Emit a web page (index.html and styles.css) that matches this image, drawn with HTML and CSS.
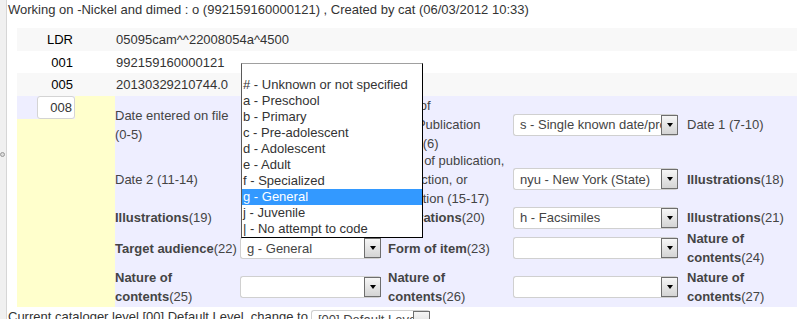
FILE: index.html
```html
<html>
    <head>
        <meta charset="utf-8">
        <title>MARC editor</title>
        <link rel="stylesheet" href="styles.css">
    </head>
    <body>
        <div class="page">
            <div class="splitter"><span class="grip"></span></div>
            <div class="main">
                <div class="title">Working on -Nickel and dimed : o (992159160000121) , Created by cat (06/03/2012 10:33)</div>

                <div class="marc">
                    <div class="field shade">
                        <div class="tag">LDR</div>
                        <div class="ind"></div>
                        <div class="val">05095cam^^22008054a^4500</div>
                    </div>
                    <div class="field plain">
                        <div class="tag">001</div>
                        <div class="ind"></div>
                        <div class="val">992159160000121</div>
                    </div>
                    <div class="field shade">
                        <div class="tag">005</div>
                        <div class="ind"></div>
                        <div class="val">20130329210744.0</div>
                    </div>

                    <div class="fixed">
                        <div class="fixed-left">
                            <div class="tagcell"><span class="taginput">008</span></div>
                        </div>
                        <div class="ff">
                            <!-- row 1 -->
                            <div class="lbl">Date entered on file (0-5)</div>
                            <div></div>
                            <div class="lbl">Type of date/Publication status(6)</div>
                            <div class="sel w2"><span class="sel-text">s - Single known date/probable date</span><span class="sel-btn"><i></i></span></div>
                            <div class="lbl">Date 1 (7-10)</div>

                            <!-- row 2 -->
                            <div class="lbl">Date 2 (11-14)</div>
                            <div></div>
                            <div class="lbl">Place of publication, production, or execution (15-17)</div>
                            <div class="sel w2"><span class="sel-text">nyu - New York (State)</span><span class="sel-btn"><i></i></span></div>
                            <div class="lbl"><b>Illustrations</b>(18)</div>

                            <!-- row 3 -->
                            <div class="lbl"><b>Illustrations</b>(19)</div>
                            <div></div>
                            <div class="lbl"><b>Illustrations</b>(20)</div>
                            <div class="sel w2"><span class="sel-text">h - Facsimiles</span><span class="sel-btn"><i></i></span></div>
                            <div class="lbl"><b>Illustrations</b>(21)</div>

                            <!-- row 4 -->
                            <div class="lbl"><b>Target audience</b>(22)</div>
                            <div class="sel w1 open">
                                <span class="sel-text">g - General</span><span class="sel-btn"><i></i></span>
                                <div class="listbox">
                                    <div class="opt first"></div>
                                    <div class="opt"># - Unknown or not specified</div>
                                    <div class="opt">a - Preschool</div>
                                    <div class="opt">b - Primary</div>
                                    <div class="opt">c - Pre-adolescent</div>
                                    <div class="opt">d - Adolescent</div>
                                    <div class="opt">e - Adult</div>
                                    <div class="opt">f - Specialized</div>
                                    <div class="opt selected">g - General</div>
                                    <div class="opt">j - Juvenile</div>
                                    <div class="opt">| - No attempt to code</div>
                                </div>
                            </div>
                            <div class="lbl"><b>Form of item</b>(23)</div>
                            <div class="sel w2"><span class="sel-text"></span><span class="sel-btn"><i></i></span></div>
                            <div class="lbl"><b>Nature of contents</b>(24)</div>

                            <!-- row 5 -->
                            <div class="lbl"><b>Nature of contents</b>(25)</div>
                            <div class="sel w1"><span class="sel-text"></span><span class="sel-btn"><i></i></span></div>
                            <div class="lbl"><b>Nature of contents</b>(26)</div>
                            <div class="sel w2"><span class="sel-text"></span><span class="sel-btn"><i></i></span></div>
                            <div class="lbl"><b>Nature of contents</b>(27)</div>
                        </div>
                    </div>
                </div>

                <div class="footer">
                    <span class="footer-text">Current cataloger level [00] Default Level, change to</span>
                    <div class="sel wf"><span class="sel-text">[00] Default Level</span><span class="sel-btn"><i></i></span></div>
                </div>
            </div>
        </div>
    </body>
</html>
```
FILE: styles.css
```css
body{
    margin:0;
    font-family:"Liberation Sans", Arial, sans-serif;
    font-size:13px;
    color:#333;
    background:#fff;
    overflow:hidden;
}

.page{
    display:flex;
    min-height:319px;
}
.splitter{
    flex:none;
    width:7px;
    box-sizing:border-box;
    background:#f0f0f0;
    border-right:1px solid #d6d6d6;
    padding-top:152px;
}
.grip{
    display:block;
    width:5px;
    height:5px;
    box-sizing:border-box;
    border:1px solid #999;
    border-radius:50%;
    background:#dcdcdc;
}
.main{
    flex:1;
    min-width:0;
    padding-left:1px;
}
.title{
    height:28px;
    line-height:20px;
    white-space:nowrap;
}

.marc{
    margin-left:9px;
}
.field{
    display:flex;
    align-items:center;
    height:23px;
}
.field.plain{
    height:22px;
}
.shade{
    background:#f8f8f8;
}
.tag{
    width:56px;
    padding-right:2px;
    text-align:right;
    color:#000;
}
.ind{
    width:40px;
}
.val{
    padding-left:1px;
}

.fixed{
    display:flex;
    height:211px;
    background:#eeeeff;
}
.fixed-left{
    flex:none;
    width:98px;
    background:#ffffcc;
}
.tagcell{
    width:58px;
    height:23px;
    display:flex;
    justify-content:flex-end;
    background:#eeeeff;
}
.taginput{
    width:38px;
    height:23px;
    box-sizing:border-box;
    border:1px solid #d4d4d4;
    border-radius:3px;
    background:#fff;
    text-align:right;
    padding-right:2px;
    line-height:21px;
    color:#333;
}

.ff{
    flex:1;
    display:grid;
    grid-template-columns:125px 148px 125px 174px 1fr;
    grid-template-rows:57px 52px 25px 36px 41px;
    align-items:center;
    line-height:19px;
}
.lbl{
    color:#444;
}
.lbl b{
    color:#444;
}

.sel{
    height:22px;
    box-sizing:border-box;
    display:flex;
    align-items:center;
    border:1px solid #d0d0d0;
    border-right:none;
    border-radius:3px;
    background:#fff;
}
.w1{ width:141px; }
.w2{ width:165px; }
.wf{ width:119px; }
.sel-text{
    flex:1;
    min-width:0;
    padding-left:6px;
    overflow:hidden;
    white-space:nowrap;
    color:#444;
}
.sel-btn{
    flex:none;
    width:17px;
    height:20px;
    box-sizing:border-box;
    border:1px solid #6e6e6e;
    background:linear-gradient(#f6f6f6, #d4d4d4);
    display:flex;
    align-items:center;
    justify-content:center;
}
.sel-btn i{
    width:0;
    height:0;
    border-left:3px solid transparent;
    border-right:3px solid transparent;
    border-top:4px solid #000;
}

.open{
    position:relative;
}
.listbox{
    position:absolute;
    left:0;
    bottom:100%;
    width:182px;
    box-sizing:border-box;
    border:1px solid #000;
    border-top-color:#a0a0a0;
    border-left-color:#5a5a5a;
    background:#fff;
    z-index:5;
}
.opt{
    height:16px;
    line-height:16px;
    padding-left:1px;
    white-space:nowrap;
    color:#333;
}
.opt.first{
    height:13px;
}
.opt.selected{
    background:#3399ff;
    color:#fff;
}

.footer{
    display:flex;
    align-items:flex-start;
    padding-top:2px;
}
.footer-text{
    line-height:16px;
    color:#333;
}
.footer .sel{
    margin-left:3px;
    margin-top:1px;
    align-items:flex-start;
}
.footer .sel-text{
    line-height:16px;
    padding-top:1px;
}
```
